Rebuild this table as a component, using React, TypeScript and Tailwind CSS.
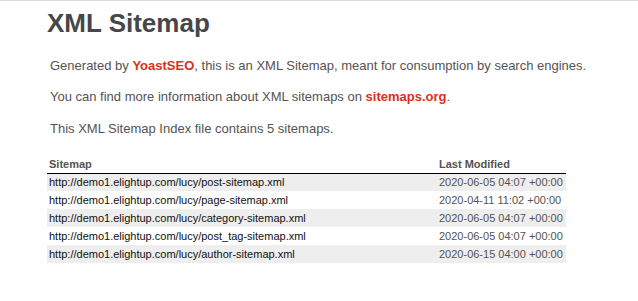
import React from "react";

const rows = [
  ["http://demo1.elightup.com/lucy/post-sitemap.xml", "2020-06-05 04:07 +00:00"],
  ["http://demo1.elightup.com/lucy/page-sitemap.xml", "2020-04-11 11:02 +00:00"],
  ["http://demo1.elightup.com/lucy/category-sitemap.xml", "2020-06-05 04:07 +00:00"],
  ["http://demo1.elightup.com/lucy/post_tag-sitemap.xml", "2020-06-05 04:07 +00:00"],
  ["http://demo1.elightup.com/lucy/author-sitemap.xml", "2020-06-15 04:00 +00:00"],
];

export default function App() {
  return (
    <div
      className="min-h-[301px] w-full bg-white border-t border-[#dcdcdc] text-[#545353] text-[13px]"
      style={{ fontFamily: '"Liberation Sans", Arial, sans-serif' }}
    >
      <div className="pl-[47px] pr-[20px]">
        <h1 className="text-[26px] font-bold leading-[32px] pt-[6px] text-[#474747]">XML Sitemap</h1>
        <div className="mt-[19px] mx-[3px] leading-[16px] whitespace-nowrap">
          Generated by{" "}
          <a className="text-[#da3114] font-bold">YoastSEO</a>, this is an XML Sitemap, meant for consumption by search engines.
        </div>
        <div className="mt-[15px] mx-[3px] leading-[16px] whitespace-nowrap">
          You can find more information about XML sitemaps on{" "}
          <a className="text-[#da3114] font-bold">sitemaps.org</a>.
        </div>
        <div className="mt-[16px] mx-[3px] leading-[16px] whitespace-nowrap">
          This XML Sitemap Index file contains 5 sitemaps.
        </div>
        <table className="mt-[18px] w-[519px] border-collapse text-[11px]">
          <thead>
            <tr>
              <th className="text-left font-bold pl-[2px] pt-[1px] pb-0 h-[17px] border-b border-black">Sitemap</th>
              <th className="text-left font-bold pl-[2px] pt-[1px] pb-0 w-[129px] border-b border-black">Last Modified</th>
            </tr>
          </thead>
          <tbody>
            {rows.map((r, i) => (
              <tr key={i} className={i % 2 === 0 ? "bg-[#eeeeee]" : "bg-white"}>
                <td className="h-[18px] pl-[2px] text-[#111]">{r[0]}</td>
                <td className="pl-[2px]">{r[1]}</td>
              </tr>
            ))}
          </tbody>
        </table>
      </div>
    </div>
  );
}
